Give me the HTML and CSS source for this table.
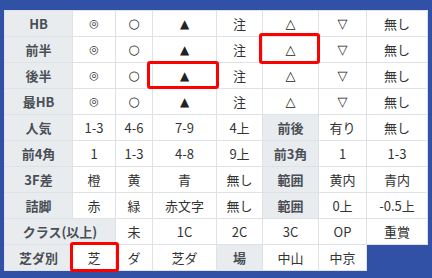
FILE: index.html
```html
<!DOCTYPE html>
<html lang="ja">
<head>
<meta charset="utf-8">
<link rel="stylesheet" href="styles.css">
</head>
<body>
<div class="wrap">
<table class="grid">
<colgroup>
<col class="c1"><col class="c2"><col class="c3"><col class="c4"><col class="c5"><col class="c6"><col class="c7"><col class="c8">
</colgroup>
<tbody>
<tr><th>HB</th><td class="sym dbl">◎</td><td class="sym">○</td><td class="sym tri">▲</td><td>注</td><td class="sym">△</td><td class="sym">▽</td><td>無し</td></tr>
<tr><th>前半</th><td class="sym dbl">◎</td><td class="sym">○</td><td class="sym tri">▲</td><td>注</td><td class="sym">△</td><td class="sym">▽</td><td>無し</td></tr>
<tr><th>後半</th><td class="sym dbl">◎</td><td class="sym">○</td><td class="sym tri">▲</td><td>注</td><td class="sym">△</td><td class="sym">▽</td><td>無し</td></tr>
<tr><th>最HB</th><td class="sym dbl">◎</td><td class="sym">○</td><td class="sym tri">▲</td><td>注</td><td class="sym">△</td><td class="sym">▽</td><td>無し</td></tr>
<tr><th>人気</th><td>1-3</td><td>4-6</td><td>7-9</td><td>4上</td><th>前後</th><td>有り</td><td>無し</td></tr>
<tr><th>前4角</th><td>1</td><td>1-3</td><td>4-8</td><td>9上</td><th>前3角</th><td>1</td><td>1-3</td></tr>
<tr><th>3F差</th><td>橙</td><td>黄</td><td>青</td><td>無し</td><th>範囲</th><td>黄内</td><td>青内</td></tr>
<tr><th>詰脚</th><td>赤</td><td>緑</td><td>赤文字</td><td>無し</td><th>範囲</th><td>0上</td><td>-0.5上</td></tr>
<tr><th colspan="2">クラス(以上)</th><td>未</td><td>1C</td><td>2C</td><td>3C</td><td>OP</td><td>重賞</td></tr>
<tr><th>芝ダ別</th><td>芝</td><td>ダ</td><td>芝ダ</td><th>場</th><td>中山</td><td>中京</td></tr>
</tbody>
</table>
<div class="mark m1"></div>
<div class="mark m2"></div>
<div class="mark m3"></div>
</div>
</body>
</html>
```
FILE: styles.css
```css
html, body {
  margin: 0;
  padding: 0;
}
body {
  background: #3151a6;
  width: 432px;
  height: 278px;
  overflow: hidden;
  font-family: "Noto Sans CJK JP", "Noto Sans", sans-serif;
  font-size: 13px;
  color: #333;
}
.wrap {
  position: relative;
  padding: 10px 0 0 4px;
}
.grid {
  border-collapse: collapse;
  table-layout: fixed;
  width: 423px;
}
.c1 { width: 68px; }
.c2 { width: 43px; }
.c3 { width: 37px; }
.c4 { width: 64px; }
.c5 { width: 46px; }
.c6 { width: 56px; }
.c7 { width: 48px; }
.c8 { width: 61px; }
.grid th,
.grid td {
  border: 1px solid #dee2e6;
  height: 25px;
  padding: 0;
  text-align: center;
  vertical-align: middle;
  line-height: 16px;
  white-space: nowrap;
}
.grid td {
  background: #fff;
  font-weight: 400;
}
.grid th {
  background: #e9ecef;
  color: #4a4f55;
  font-weight: 700;
}
.grid td.sym {
  font-family: "DejaVu Sans", sans-serif;
  font-size: 13px;
  color: #222;
}
.grid td.tri {
  font-size: 12px;
}
.grid td.dbl {
  font-size: 11px;
  color: #333;
}
.mark {
  position: absolute;
  border: 3px solid #f00;
  border-radius: 3px;
  box-sizing: border-box;
}
.m1 { left: 147px; top: 61px; width: 72px; height: 28px; }
.m2 { left: 259px; top: 33px; width: 61px; height: 31px; }
.m3 { left: 70px; top: 242px; width: 49px; height: 30px; }
```
